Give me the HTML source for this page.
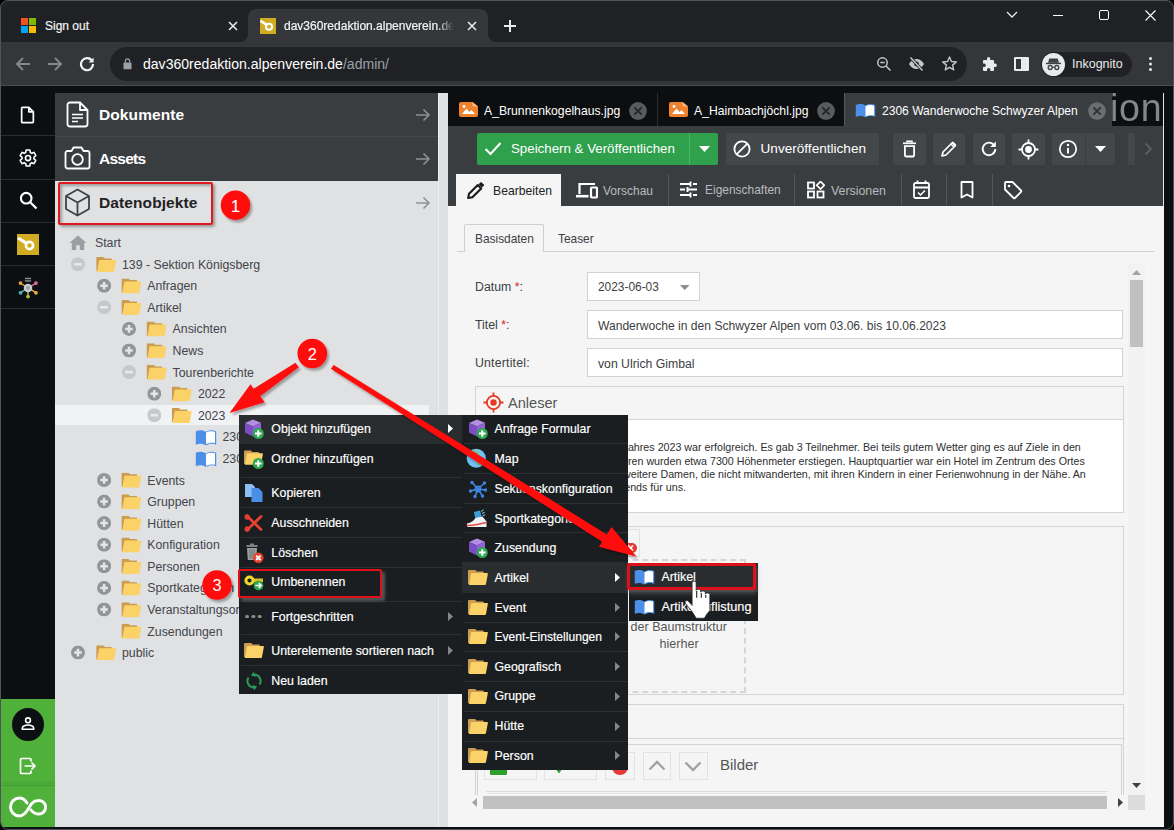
<!DOCTYPE html>
<html lang="de">
<head>
<meta charset="utf-8">
<title>dav360redaktion</title>
<style>
*{box-sizing:border-box;margin:0;padding:0}
html,body{width:1174px;height:830px;overflow:hidden;background:#0c0f12;font-family:"Liberation Sans",sans-serif;}
#root{position:relative;width:1174px;height:830px;overflow:hidden;background:#0c0f12}
.abs{position:absolute}
.t{position:absolute;white-space:nowrap;line-height:1}
/* ---------- browser chrome ---------- */
#tabstrip{left:0;top:0;width:1174px;height:42px;background:#202124}
#tab2{left:248px;top:9px;width:240px;height:34px;background:#35363a;border-radius:8px 8px 0 0}
#toolbar{left:0;top:42px;width:1174px;height:44px;background:#35363a;border-bottom:1px solid #4a4c50}
#omni{left:110px;top:47px;width:857px;height:33.500px;border-radius:17px;background:#202124}
.ct{color:#f1f3f4;font-size:12px;-webkit-text-stroke:.2px #f1f3f4}
/* ---------- pimcore ---------- */
#leftnav{left:0;top:86px;width:55px;height:744px;background:#0c0f12}
.navsep{position:absolute;left:0;width:55px;height:1px;background:#2a2d30}
#sidebar{left:55px;top:93px;width:383px;height:734px;background:#e0e1e2}
.acc{position:absolute;left:0;width:383px;height:44px;background:#3a3d40;color:#fff}
.acc .t{font-weight:bold;font-size:15.5px;left:44px;top:14px;letter-spacing:.1px}
#splitter{left:438px;top:93px;width:10px;height:734px;background:#dfe0e2;border-left:1.500px solid #eceded}
.tr{position:absolute;font-size:12.3px;color:#42454b;white-space:nowrap;line-height:14px}
.fold{position:absolute;width:19px;height:16px}
.exp{position:absolute;width:14px;height:14px;border-radius:50%}

/* main */
.mtab{position:absolute;top:93px;height:33px;color:#fff;font-size:12.150px}
.tb{position:absolute;top:133px;height:32px;background:#444749;border-radius:2px}
.tbt{position:absolute;white-space:nowrap;line-height:1;color:#fff}
.vsep{position:absolute;top:174px;width:1px;height:32px;background:#54575a}
.fld{position:absolute;background:#fff;border:1px solid #d2d2d2}
.lbl{position:absolute;white-space:nowrap;line-height:1;font-size:12.300px;color:#3d4043}
.fs{position:absolute;border:1px solid #d4d4d4}
.rte{position:absolute;white-space:nowrap;font-size:10.700px;color:#2e2e2e;line-height:1;text-align:right}

/* menus */
.menu{position:absolute;background:#1b1e21}
.mi{position:absolute;white-space:nowrap;line-height:1;font-size:12.350px;color:#fff;-webkit-text-stroke:.18px #fff}
.msep{position:absolute;height:1px;background:#2e3134}
</style>
</head>
<body>
<div id="root">

<!-- ================= BROWSER CHROME ================= -->
<div id="tabstrip" class="abs"></div>
<div id="tab2" class="abs"></div>
<div id="toolbar" class="abs"></div>
<div id="omni" class="abs"></div>

<svg class="abs" style="left:240px;top:34px" width="8" height="8" viewBox="0 0 8 8"><path d="M8 0V8H0A8 8 0 0 0 8 0Z" fill="#35363a"/></svg>
<svg class="abs" style="left:488px;top:34px" width="8" height="8" viewBox="0 0 8 8"><path d="M0 0V8H8A8 8 0 0 1 0 0Z" fill="#35363a"/></svg>
<!-- tab 1 -->
<div class="abs" style="left:21px;top:18px;width:7px;height:7px;background:#f25022"></div>
<div class="abs" style="left:29px;top:18px;width:7px;height:7px;background:#7fba00"></div>
<div class="abs" style="left:21px;top:26px;width:7px;height:7px;background:#00a4ef"></div>
<div class="abs" style="left:29px;top:26px;width:7px;height:7px;background:#ffb900"></div>
<div class="t ct" style="left:45px;top:20px;">Sign out</div>
<svg class="abs" style="left:227px;top:20px" width="12" height="12" viewBox="0 0 12 12"><path d="M2 2L10 10M10 2L2 10" stroke="#e8eaed" stroke-width="1.6" fill="none"/></svg>
<!-- tab 2 -->
<div class="abs" style="left:260px;top:18px;width:16px;height:16px;background:#d0ac22"></div>
<svg class="abs" style="left:260px;top:18px" width="16" height="16" viewBox="0 0 16 16"><circle cx="9" cy="8.800" r="3" fill="none" stroke="#fff" stroke-width="2.100"/><path d="M.5 2.800L6.800 7" stroke="#fff" stroke-width="2.600" fill="none"/></svg>
<div class="t ct" style="left:284px;top:20px;width:170px;overflow:hidden;-webkit-mask-image:linear-gradient(90deg,#000 90%,transparent);mask-image:linear-gradient(90deg,#000 90%,transparent)">dav360redaktion.alpenverein.de</div>
<svg class="abs" style="left:466px;top:20px" width="12" height="12" viewBox="0 0 12 12"><path d="M2 2L10 10M10 2L2 10" stroke="#e8eaed" stroke-width="1.6" fill="none"/></svg>
<svg class="abs" style="left:503px;top:19px" width="14" height="14" viewBox="0 0 14 14"><path d="M7 1V13M1 7H13" stroke="#e8eaed" stroke-width="2" fill="none"/></svg>
<!-- window controls -->
<svg class="abs" style="left:1005px;top:10px" width="14" height="10" viewBox="0 0 14 10"><path d="M2 2L7 7L12 2" stroke="#e8eaed" stroke-width="1.3" fill="none"/></svg>
<div class="abs" style="left:1053px;top:15px;width:10px;height:1px;background:#fff"></div>
<div class="abs" style="left:1099px;top:10px;width:10px;height:10px;border:1px solid #fff;border-radius:2px"></div>
<svg class="abs" style="left:1145px;top:10px" width="11" height="11" viewBox="0 0 11 11"><path d="M.5 .5L10.5 10.5M10.5 .5L.5 10.5" stroke="#fff" stroke-width="1.1" fill="none"/></svg>
<!-- nav buttons -->
<svg class="abs" style="left:15px;top:56px" width="16" height="16" viewBox="0 0 16 16"><path d="M15 8H2.5M8 2L2 8L8 14" stroke="#86888c" stroke-width="1.8" fill="none"/></svg>
<svg class="abs" style="left:47px;top:56px" width="16" height="16" viewBox="0 0 16 16"><path d="M1 8H13.5M8 2L14 8L8 14" stroke="#86888c" stroke-width="1.8" fill="none"/></svg>
<svg class="abs" style="left:79px;top:56px" width="16" height="16" viewBox="0 0 16 16"><path d="M13.2 5.2A6 6 0 1 0 14 8" stroke="#f1f3f4" stroke-width="2.200" fill="none"/><path d="M14.6 1.6V6.6H9.6Z" fill="#e8eaed"/></svg>
<!-- omnibox content -->
<svg class="abs" style="left:122.500px;top:58px" width="9" height="11.700" viewBox="0 0 10 13"><rect x="0.5" y="5" width="9" height="7.5" rx="1" fill="#9aa0a6"/><path d="M2.6 5V3.4a2.4 2.4 0 0 1 4.8 0V5" stroke="#9aa0a6" stroke-width="1.4" fill="none"/></svg>
<div class="t" style="left:143px;top:57.200px;font-size:14.05px;color:#fff">dav360redaktion.alpenverein.de<span style="color:#9aa0a6">/admin/</span></div>
<svg class="abs" style="left:876px;top:56px" width="16" height="16" viewBox="0 0 16 16"><circle cx="6.5" cy="6.5" r="4.7" stroke="#c4c7c9" stroke-width="1.5" fill="none"/><path d="M10 10L14.5 14.5M4.3 6.5H8.7" stroke="#c4c7c9" stroke-width="1.5" fill="none"/></svg>
<svg class="abs" style="left:908px;top:56px" width="17" height="16" viewBox="0 0 17 16"><path d="M1 8C3 4.5 5.5 3 8.5 3S14 4.5 16 8C14 11.5 11.500 13 8.5 13S3 11.500 1 8Z" fill="#c4c7c9"/><circle cx="8.500" cy="8" r="2.4" fill="#202124"/><path d="M2.5 1.500L14.500 14.500" stroke="#202124" stroke-width="3.200"/><path d="M2.500 1.500L14.500 14.500" stroke="#c4c7c9" stroke-width="1.500"/></svg>
<svg class="abs" style="left:941px;top:55px" width="17" height="17" viewBox="0 0 17 17"><path d="M8.5 2L10.4 6.500L15.300 6.900L11.600 10.100L12.700 14.900L8.500 12.300L4.300 14.900L5.400 10.100L1.700 6.900L6.600 6.500Z" stroke="#c4c7c9" stroke-width="1.400" fill="none" stroke-linejoin="round"/></svg>
<svg class="abs" style="left:981px;top:56px" width="16" height="16" viewBox="0 0 16 16"><path d="M6 2.600a1.600 1.600 0 0 1 3.200 0V4H12a1 1 0 0 1 1 1v2.500h1.200a1.700 1.700 0 0 1 0 3.400H13V14a1 1 0 0 1-1 1H9.400v-1.200a1.700 1.700 0 0 0-3.400 0V15H3a1 1 0 0 1-1-1v-3h1.200a1.700 1.700 0 0 0 0-3.400H2V5a1 1 0 0 1 1-1h3Z" fill="#e8eaed"/></svg>
<div class="abs" style="left:1014px;top:57px;width:15px;height:14px;border:2px solid #e8eaed;border-radius:1px;background:linear-gradient(90deg,transparent 0 5px,#e8eaed 5px)"></div>
<div class="abs" style="left:1041px;top:52px;width:91px;height:25px;border-radius:13px;background:#202124"></div>
<div class="abs" style="left:1042px;top:53px;width:23px;height:23px;border-radius:50%;background:#e8eaed"></div>
<svg class="abs" style="left:1045px;top:57px" width="17" height="15" viewBox="0 0 17 15"><path d="M4.300 1.500h8.400l1.300 4.200H3Z" fill="#3c4043"/><rect x="1" y="5.700" width="15" height="1.500" fill="#3c4043"/><circle cx="5.200" cy="10.500" r="2" fill="none" stroke="#3c4043" stroke-width="1.300"/><circle cx="11.800" cy="10.500" r="2" fill="none" stroke="#3c4043" stroke-width="1.300"/><path d="M7.200 10.200h2.600" stroke="#3c4043" stroke-width="1.200"/></svg>
<div class="t" style="left:1072px;top:58px;font-size:12.5px;color:#e8eaed">Inkognito</div>
<div class="abs" style="left:1149px;top:57px;width:3px;height:3px;border-radius:50%;background:#e8eaed;box-shadow:0 5.500px 0 #e8eaed,0 11px 0 #e8eaed"></div>
<!--CHROME-->

<!-- ================= LEFT NAV ================= -->
<div id="leftnav" class="abs">

<div class="navsep" style="top:49px"></div>
<div class="navsep" style="top:92.600px"></div>
<div class="navsep" style="top:136.200px"></div>
<div class="navsep" style="top:179px"></div>
<div class="navsep" style="top:222px"></div>
<!-- file -->
<svg class="abs" style="left:20px;top:20px" width="15" height="18" viewBox="0 0 16 20"><path d="M2.500 1.500H9.500L14.500 6.500V17.500a1 1 0 0 1-1 1H2.500a1 1 0 0 1-1-1V2.500a1 1 0 0 1 1-1ZM9.500 1.500V6.500H14.500" stroke="#fff" stroke-width="1.900" fill="none" stroke-linejoin="round"/></svg>
<!-- gear -->
<svg class="abs" style="left:18px;top:62px" width="20" height="20" viewBox="0 0 24 24"><path d="M19.140 12.940c.040-.300.060-.610.060-.940s-.020-.640-.070-.940l2.030-1.580a.490.490 0 0 0 .120-.610l-1.920-3.320a.488.488 0 0 0-.590-.220l-2.390.960c-.500-.380-1.030-.700-1.620-.940l-.360-2.540a.484.484 0 0 0-.480-.410h-3.840c-.240 0-.430.170-.470.410l-.360 2.540c-.590.240-1.130.570-1.620.940l-2.390-.960c-.220-.080-.470 0-.590.220L2.740 8.870c-.120.210-.080.470.120.610l2.030 1.580c-.050.300-.090.630-.090.940s.020.640.070.940l-2.030 1.580a.490.490 0 0 0-.120.610l1.920 3.320c.120.220.370.290.590.220l2.390-.960c.500.380 1.030.700 1.620.940l.360 2.540c.050.240.240.410.480.410h3.840c.240 0 .440-.170.470-.410l.360-2.540c.590-.240 1.130-.560 1.620-.940l2.390.960c.220.080.470 0 .590-.220l1.920-3.320c.120-.220.070-.470-.120-.610l-2.010-1.580z" stroke="#fff" stroke-width="1.900" fill="none"/><circle cx="12" cy="12" r="3.100" stroke="#fff" stroke-width="1.900" fill="none"/></svg>
<!-- search -->
<svg class="abs" style="left:19px;top:105px" width="19" height="19" viewBox="0 0 19 19"><circle cx="7.200" cy="7.200" r="5.300" stroke="#fff" stroke-width="2.100" fill="none"/><path d="M11.200 11.200L17.500 17.500" stroke="#fff" stroke-width="2.300"/></svg>
<!-- yellow logo -->
<div class="abs" style="left:17px;top:148px;width:22px;height:21px;background:#d0ac22"></div>
<svg class="abs" style="left:17px;top:148px" width="22" height="21" viewBox="0 0 22 21"><circle cx="12.500" cy="11.500" r="3.600" fill="none" stroke="#fff" stroke-width="2.600"/><path d="M1 4L9.800 9.400" stroke="#fff" stroke-width="3" fill="none"/></svg>
<!-- hub icon -->
<svg class="abs" style="left:17px;top:190px" width="22" height="23" viewBox="0 0 24 26"><g stroke-width="1.600"><path d="M12 13.500L4 8.500" stroke="#e8a33d"/><path d="M12 13.500L20.500 8.500" stroke="#e06c9f"/><path d="M12 13.500L4 18.500" stroke="#4db6ac"/><path d="M12 13.500L20.500 18.500" stroke="#e8b23d"/><path d="M12 13.500V22" stroke="#b9c22e"/></g><circle cx="3.500" cy="8" r="2.100" fill="#e8a33d"/><circle cx="21" cy="8" r="2.100" fill="#e06c9f"/><circle cx="3.500" cy="19" r="2.100" fill="#4db6ac"/><circle cx="21" cy="19" r="2.100" fill="#e8b23d"/><circle cx="12" cy="23.300" r="2.100" fill="#b9c22e"/><circle cx="12" cy="13.500" r="4.800" fill="#c9ced2"/><circle cx="12" cy="13.500" r="2.200" fill="#9aa3ab"/><rect x="8.500" y="2" width="7" height="1.600" fill="#8a9096"/><rect x="8.500" y="4.800" width="7" height="1.600" fill="#8a9096"/></svg>
<!-- bottom green -->
<div class="abs" style="left:1px;top:613px;width:54px;height:130px;background:#4fb03a;border-radius:0 0 0 7px"></div>
<div class="abs" style="left:1px;top:699px;width:54px;height:1px;background:#43a035;box-shadow:0 -2px 3px rgba(0,0,0,.18)"></div>
<div class="abs" style="left:12px;top:622px;width:32px;height:33px;border-radius:50%;background:#0c0f12"></div>
<svg class="abs" style="left:20px;top:630px" width="16" height="16" viewBox="0 0 16 16"><circle cx="8" cy="4.300" r="2.400" stroke="#fff" stroke-width="1.600" fill="none"/><path d="M2.300 13.200V12c0-2 3.500-3 5.700-3s5.700 1 5.700 3v1.200Z" stroke="#fff" stroke-width="1.600" fill="none" stroke-linejoin="round"/></svg>
<svg class="abs" style="left:19px;top:671px" width="18" height="18" viewBox="0 0 18 18"><path d="M12 4.500V2.500a1 1 0 0 0-1-1H2.500a1 1 0 0 0-1 1V15.500a1 1 0 0 0 1 1H11a1 1 0 0 0 1-1V13.500" stroke="#fff" stroke-width="1.700" fill="none"/><path d="M5.500 9H16M12.500 5.500L16 9L12.500 12.500" stroke="#fff" stroke-width="1.700" fill="none"/></svg>
<svg class="abs" style="left:8px;top:708px" width="40" height="26" viewBox="0 0 40 26"><path d="M20.500 14.500C17.500 19.500 15 22 11.500 22A9 9 0 1 1 11.500 4C15 4 17.200 6 19 9" stroke="#fff" stroke-width="2.900" fill="none" stroke-linecap="round"/><path d="M20.500 14.500C23 9.500 26 6.500 30 6.500A6.800 6.800 0 1 1 30 20C26.500 20 24 17.500 22.200 15" stroke="#fff" stroke-width="2.900" fill="none"/></svg>

</div>

<!-- ================= SIDEBAR ================= -->
<div id="sidebar" class="abs">

<div class="acc" style="top:0"><div class="t">Dokumente</div></div>
<div class="acc" style="top:43px;height:45px;border-top:1px solid #45484b"><div class="t" style="top:14px;letter-spacing:-.75px">Assets</div></div>
<div class="abs" style="left:0;top:88px;width:383px;height:44px;"><div class="t" style="font-weight:bold;font-size:15.500px;left:44px;top:14px;color:#1f2124;letter-spacing:.1px">Datenobjekte</div></div>
<!-- doc icon -->
<svg class="abs" style="left:11px;top:8px" width="23" height="27" viewBox="0 0 23 27"><path d="M4 1.500H14L21.500 9V23a2.500 2.500 0 0 1-2.500 2.500H4A2.500 2.500 0 0 1 1.500 23V4A2.500 2.500 0 0 1 4 1.500ZM14 1.500V9H21.500" stroke="#fff" stroke-width="1.800" fill="none" stroke-linejoin="round"/><path d="M6 13.500H17M6 17H17M6 20.500H12" stroke="#fff" stroke-width="1.700"/></svg>
<!-- camera -->
<svg class="abs" style="left:9px;top:53px" width="27" height="24" viewBox="0 0 27 24"><path d="M3.500 5H7.500L9.500 1.500H17.500L19.500 5H23.500a2 2 0 0 1 2 2V20.500a2 2 0 0 1-2 2H3.500a2 2 0 0 1-2-2V7a2 2 0 0 1 2-2Z" stroke="#fff" stroke-width="1.800" fill="none" stroke-linejoin="round"/><circle cx="13.500" cy="13.500" r="5.300" stroke="#fff" stroke-width="1.800" fill="none"/></svg>
<!-- cube -->
<svg class="abs" style="left:9px;top:95px" width="27" height="29" viewBox="0 0 27 29"><path d="M13.500 1.500L25 8V21L13.500 27.500L2 21V8ZM2 8L13.500 14.500L25 8M13.500 14.500V27.500" stroke="#3f4245" stroke-width="1.800" fill="none" stroke-linejoin="round"/></svg>
<svg class="abs" style="left:360px;top:15px" width="16" height="14" viewBox="0 0 16 14"><path d="M1 7H14M8.500 1.500L14 7L8.500 12.500" stroke="#8e9194" stroke-width="1.600" fill="none"/></svg><svg class="abs" style="left:360px;top:59px" width="16" height="14" viewBox="0 0 16 14"><path d="M1 7H14M8.500 1.500L14 7L8.500 12.500" stroke="#8e9194" stroke-width="1.600" fill="none"/></svg><svg class="abs" style="left:360px;top:103px" width="16" height="14" viewBox="0 0 16 14"><path d="M1 7H14M8.500 1.500L14 7L8.500 12.500" stroke="#8e9194" stroke-width="1.600" fill="none"/></svg><svg width="0" height="0" style="position:absolute"><defs><symbol id="fold" viewBox="0 0 20 15"><path d="M0 1Q0 0 1 0H7.200L8.600 1.600H15Q15.700 1.600 15.700 2.400V4.500H3.200L1.300 14.300H.6Q0 14.300 0 13.500Z" fill="#cc9c50"/><path d="M3.700 3H19.200Q20 3 19.850 3.900L18 14.100Q17.800 15 16.900 15H1.600Q.8 15 1 14.100L2.900 3.800Q3.050 3 3.700 3Z" fill="#fbd267"/></symbol><symbol id="book" viewBox="0 0 22 16" preserveAspectRatio="none"><path d="M.8 2C4 .7 8 .7 11 2.700C14 .7 18 .7 21.200 2V14.800C18 13.500 14 13.500 11 15.500C8 13.500 4 13.500 .8 14.800Z" fill="#4c8fe8"/><path d="M11 3.400C13.500 1.900 17 1.700 20 2.600V13.400C17 12.600 13.500 12.900 11 14.400Z" fill="#fff"/></symbol></defs></svg>
<svg class="abs" style="left:0;top:0;transform:translate(14.0px,142.0px)" width="18" height="16" viewBox="0 0 18 16"><path d="M9 .5L17.500 8H15.200V15H10.800V10.200H7.200V15H2.800V8H.5Z" fill="#9b9ea1"/></svg>
<div class="tr" style="left:0;top:0;transform:translate(40.0px,143.1px)">Start</div>
<svg class="abs" style="left:0;top:0;transform:translate(16.0px,164.2px)" width="14" height="14" viewBox="0 0 14 14"><circle cx="7" cy="7" r="7" fill="#c6c8ca"/><path d="M3.200 7H10.800" stroke="#e9eaeb" stroke-width="2.500"/></svg>
<svg class="abs" style="left:0;top:0;transform:translate(41.2px,163.9px)" width="20" height="15"><use href="#fold"/></svg>
<div class="tr" style="left:0;top:0;transform:translate(67.0px,164.7px)">139 - Sektion Königsberg</div>
<svg class="abs" style="left:0;top:0;transform:translate(42.1px,185.8px)" width="14" height="14" viewBox="0 0 14 14"><circle cx="7" cy="7" r="7" fill="#929598"/><path d="M3.200 7H10.800M7 3.200V10.800" stroke="#e4e5e6" stroke-width="2.500"/></svg>
<svg class="abs" style="left:0;top:0;transform:translate(66.4px,185.5px)" width="20" height="15"><use href="#fold"/></svg>
<div class="tr" style="left:0;top:0;transform:translate(92.3px,186.3px)">Anfragen</div>
<svg class="abs" style="left:0;top:0;transform:translate(42.1px,207.3px)" width="14" height="14" viewBox="0 0 14 14"><circle cx="7" cy="7" r="7" fill="#c6c8ca"/><path d="M3.200 7H10.800" stroke="#e9eaeb" stroke-width="2.500"/></svg>
<svg class="abs" style="left:0;top:0;transform:translate(66.4px,207.0px)" width="20" height="15"><use href="#fold"/></svg>
<div class="tr" style="left:0;top:0;transform:translate(92.3px,207.8px)">Artikel</div>
<svg class="abs" style="left:0;top:0;transform:translate(67.0px,228.9px)" width="14" height="14" viewBox="0 0 14 14"><circle cx="7" cy="7" r="7" fill="#929598"/><path d="M3.200 7H10.800M7 3.200V10.800" stroke="#e4e5e6" stroke-width="2.500"/></svg>
<svg class="abs" style="left:0;top:0;transform:translate(91.6px,228.6px)" width="20" height="15"><use href="#fold"/></svg>
<div class="tr" style="left:0;top:0;transform:translate(117.6px,229.4px)">Ansichten</div>
<svg class="abs" style="left:0;top:0;transform:translate(67.0px,250.5px)" width="14" height="14" viewBox="0 0 14 14"><circle cx="7" cy="7" r="7" fill="#929598"/><path d="M3.200 7H10.800M7 3.200V10.800" stroke="#e4e5e6" stroke-width="2.500"/></svg>
<svg class="abs" style="left:0;top:0;transform:translate(91.6px,250.2px)" width="20" height="15"><use href="#fold"/></svg>
<div class="tr" style="left:0;top:0;transform:translate(117.6px,251.0px)">News</div>
<svg class="abs" style="left:0;top:0;transform:translate(67.0px,272.1px)" width="14" height="14" viewBox="0 0 14 14"><circle cx="7" cy="7" r="7" fill="#c6c8ca"/><path d="M3.200 7H10.800" stroke="#e9eaeb" stroke-width="2.500"/></svg>
<svg class="abs" style="left:0;top:0;transform:translate(91.6px,271.8px)" width="20" height="15"><use href="#fold"/></svg>
<div class="tr" style="left:0;top:0;transform:translate(117.6px,272.6px)">Tourenberichte</div>
<svg class="abs" style="left:0;top:0;transform:translate(92.3px,293.7px)" width="14" height="14" viewBox="0 0 14 14"><circle cx="7" cy="7" r="7" fill="#929598"/><path d="M3.200 7H10.800M7 3.200V10.800" stroke="#e4e5e6" stroke-width="2.500"/></svg>
<svg class="abs" style="left:0;top:0;transform:translate(116.8px,293.4px)" width="20" height="15"><use href="#fold"/></svg>
<div class="tr" style="left:0;top:0;transform:translate(142.9px,294.2px)">2022</div>
<div class="abs" style="left:0;top:0;transform:translate(0.0px,312.0px);width:374px;height:20.400px;background:#f1f2f3"></div>
<svg class="abs" style="left:0;top:0;transform:translate(92.3px,315.2px)" width="14" height="14" viewBox="0 0 14 14"><circle cx="7" cy="7" r="7" fill="#c6c8ca"/><path d="M3.200 7H10.800" stroke="#e9eaeb" stroke-width="2.500"/></svg>
<svg class="abs" style="left:0;top:0;transform:translate(116.8px,314.9px)" width="20" height="15"><use href="#fold"/></svg>
<div class="tr" style="left:0;top:0;transform:translate(142.9px,315.7px)">2023</div>
<svg class="abs" style="left:0;top:0;transform:translate(140.0px,336.0px)" width="22" height="17"><use href="#book"/></svg>
<div class="tr" style="left:0;top:0;transform:translate(167.5px,337.3px)">2306 Wanderwoche Schwyzer Alpen</div>
<svg class="abs" style="left:0;top:0;transform:translate(140.0px,357.6px)" width="22" height="17"><use href="#book"/></svg>
<div class="tr" style="left:0;top:0;transform:translate(167.5px,358.9px)">2307 Bergtour</div>
<svg class="abs" style="left:0;top:0;transform:translate(42.1px,380.0px)" width="14" height="14" viewBox="0 0 14 14"><circle cx="7" cy="7" r="7" fill="#929598"/><path d="M3.200 7H10.800M7 3.200V10.800" stroke="#e4e5e6" stroke-width="2.500"/></svg>
<svg class="abs" style="left:0;top:0;transform:translate(66.4px,379.7px)" width="20" height="15"><use href="#fold"/></svg>
<div class="tr" style="left:0;top:0;transform:translate(92.3px,380.5px)">Events</div>
<svg class="abs" style="left:0;top:0;transform:translate(42.1px,401.6px)" width="14" height="14" viewBox="0 0 14 14"><circle cx="7" cy="7" r="7" fill="#929598"/><path d="M3.200 7H10.800M7 3.200V10.800" stroke="#e4e5e6" stroke-width="2.500"/></svg>
<svg class="abs" style="left:0;top:0;transform:translate(66.4px,401.3px)" width="20" height="15"><use href="#fold"/></svg>
<div class="tr" style="left:0;top:0;transform:translate(92.3px,402.1px)">Gruppen</div>
<svg class="abs" style="left:0;top:0;transform:translate(42.1px,423.1px)" width="14" height="14" viewBox="0 0 14 14"><circle cx="7" cy="7" r="7" fill="#929598"/><path d="M3.200 7H10.800M7 3.200V10.800" stroke="#e4e5e6" stroke-width="2.500"/></svg>
<svg class="abs" style="left:0;top:0;transform:translate(66.4px,422.8px)" width="20" height="15"><use href="#fold"/></svg>
<div class="tr" style="left:0;top:0;transform:translate(92.3px,423.6px)">Hütten</div>
<svg class="abs" style="left:0;top:0;transform:translate(42.1px,444.7px)" width="14" height="14" viewBox="0 0 14 14"><circle cx="7" cy="7" r="7" fill="#929598"/><path d="M3.200 7H10.800M7 3.200V10.800" stroke="#e4e5e6" stroke-width="2.500"/></svg>
<svg class="abs" style="left:0;top:0;transform:translate(66.4px,444.4px)" width="20" height="15"><use href="#fold"/></svg>
<div class="tr" style="left:0;top:0;transform:translate(92.3px,445.2px)">Konfiguration</div>
<svg class="abs" style="left:0;top:0;transform:translate(42.1px,466.3px)" width="14" height="14" viewBox="0 0 14 14"><circle cx="7" cy="7" r="7" fill="#929598"/><path d="M3.200 7H10.800M7 3.200V10.800" stroke="#e4e5e6" stroke-width="2.500"/></svg>
<svg class="abs" style="left:0;top:0;transform:translate(66.4px,466.0px)" width="20" height="15"><use href="#fold"/></svg>
<div class="tr" style="left:0;top:0;transform:translate(92.3px,466.8px)">Personen</div>
<svg class="abs" style="left:0;top:0;transform:translate(42.1px,487.9px)" width="14" height="14" viewBox="0 0 14 14"><circle cx="7" cy="7" r="7" fill="#929598"/><path d="M3.200 7H10.800M7 3.200V10.800" stroke="#e4e5e6" stroke-width="2.500"/></svg>
<svg class="abs" style="left:0;top:0;transform:translate(66.4px,487.6px)" width="20" height="15"><use href="#fold"/></svg>
<div class="tr" style="left:0;top:0;transform:translate(92.3px,488.4px)">Sportkategorien</div>
<svg class="abs" style="left:0;top:0;transform:translate(42.1px,509.5px)" width="14" height="14" viewBox="0 0 14 14"><circle cx="7" cy="7" r="7" fill="#929598"/><path d="M3.200 7H10.800M7 3.200V10.800" stroke="#e4e5e6" stroke-width="2.500"/></svg>
<svg class="abs" style="left:0;top:0;transform:translate(66.4px,509.2px)" width="20" height="15"><use href="#fold"/></svg>
<div class="tr" style="left:0;top:0;transform:translate(92.3px,510.0px)">Veranstaltungsorte</div>
<svg class="abs" style="left:0;top:0;transform:translate(66.4px,530.7px)" width="20" height="15"><use href="#fold"/></svg>
<div class="tr" style="left:0;top:0;transform:translate(92.3px,531.5px)">Zusendungen</div>
<svg class="abs" style="left:0;top:0;transform:translate(16.0px,552.6px)" width="14" height="14" viewBox="0 0 14 14"><circle cx="7" cy="7" r="7" fill="#929598"/><path d="M3.200 7H10.800M7 3.200V10.800" stroke="#e4e5e6" stroke-width="2.500"/></svg>
<svg class="abs" style="left:0;top:0;transform:translate(41.2px,552.3px)" width="20" height="15"><use href="#fold"/></svg>
<div class="tr" style="left:0;top:0;transform:translate(67.0px,553.1px)">public</div>
</div>
<div id="splitter" class="abs"></div>

<!-- ================= MAIN ================= -->
<div class="abs" style="left:448px;top:93px;width:716px;height:734px;background:#f5f5f5"></div>

<!-- main tab bar -->
<div class="abs" style="left:448px;top:93px;width:716px;height:33px;background:#0c0e10"></div>
<div class="t" style="left:1109.800px;top:89.200px;font-size:38.500px;color:#84878a;letter-spacing:.8px;transform:scaleX(.975);transform-origin:0 0">ion</div>
<div class="abs" style="left:1112px;top:126px;width:52px;height:10px;background:#3a3d40"></div>
<div class="abs" style="left:657px;top:93px;width:1px;height:33px;background:#2a2d30"></div>
<div class="abs" style="left:844px;top:93px;width:268px;height:33px;background:#3a3d40;border-left:1px solid #56595c"></div>
<svg class="abs" style="left:459px;top:102px" width="19" height="15" viewBox="0 0 19 15"><path d="M2 0H13.500L19 4.500V13a2 2 0 0 1-2 2H2a2 2 0 0 1-2-2V2A2 2 0 0 1 2 0Z" fill="#f0812d"/><path d="M13.500 0L19 4.500H14.500a1 1 0 0 1-1-1Z" fill="#f8b888"/><path d="M3 12L7.500 6.500L10.500 10L12.500 8L16 12Z" fill="#fff"/><circle cx="5" cy="4.500" r="1.400" fill="#fff"/></svg><div class="t" style="left:484px;top:104.6px;font-size:12.200px;color:#fff">A_Brunnenkogelhaus.jpg</div><svg class="abs" style="left:629px;top:102px" width="18" height="18" viewBox="0 0 18 18"><circle cx="9" cy="9" r="8.900" fill="#595c5f"/><path d="M5.400 5.400L12.600 12.600M12.600 5.400L5.400 12.600" stroke="#25282b" stroke-width="1.900"/></svg><svg class="abs" style="left:669px;top:102px" width="19" height="15" viewBox="0 0 19 15"><path d="M2 0H13.500L19 4.500V13a2 2 0 0 1-2 2H2a2 2 0 0 1-2-2V2A2 2 0 0 1 2 0Z" fill="#f0812d"/><path d="M13.500 0L19 4.500H14.500a1 1 0 0 1-1-1Z" fill="#f8b888"/><path d="M3 12L7.500 6.500L10.500 10L12.500 8L16 12Z" fill="#fff"/><circle cx="5" cy="4.500" r="1.400" fill="#fff"/></svg><div class="t" style="left:694px;top:104.6px;font-size:12.200px;color:#fff">A_Haimbachjöchl.jpg</div><svg class="abs" style="left:817px;top:102px" width="18" height="18" viewBox="0 0 18 18"><circle cx="9" cy="9" r="8.900" fill="#595c5f"/><path d="M5.400 5.400L12.600 12.600M12.600 5.400L5.400 12.600" stroke="#25282b" stroke-width="1.900"/></svg><svg class="abs" style="left:855px;top:103px" width="21" height="15"><use href="#book"/></svg><div class="t" style="left:882px;top:104.6px;font-size:12.060px;color:#fff">2306 Wanderwoche Schwyzer Alpen</div><svg class="abs" style="left:1088px;top:101.800px" width="18" height="18" viewBox="0 0 18 18"><circle cx="9" cy="9" r="8.800" fill="#6b6e71"/><path d="M5.400 5.400L12.600 12.600M12.600 5.400L5.400 12.600" stroke="#2f3235" stroke-width="1.900"/></svg>
<!-- toolbar -->
<div class="abs" style="left:448px;top:126px;width:716px;height:80px;background:#3a3d40"></div>
<div class="abs" style="left:477px;top:133px;width:241px;height:32px;background:#2fa04c;border-radius:2px"></div>
<div class="abs" style="left:689px;top:133px;width:1px;height:32px;background:#4db567"></div>
<svg class="abs" style="left:484px;top:141px" width="18" height="15" viewBox="0 0 18 15"><path d="M1.500 8L6.500 13L16.500 2" stroke="#fff" stroke-width="2.100" fill="none"/></svg>
<div class="tbt" style="left:511px;top:142px;font-size:13.300px">Speichern &amp; Veröffentlichen</div>
<svg class="abs" style="left:699px;top:146px" width="11" height="6" viewBox="0 0 11 6"><path d="M0 0H11L5.500 6Z" fill="#fff"/></svg>
<div class="tb" style="left:726px;width:153px"></div>
<svg class="abs" style="left:733px;top:140px" width="18" height="18" viewBox="0 0 18 18"><circle cx="9" cy="9" r="7.600" stroke="#fff" stroke-width="1.800" fill="none"/><path d="M3.800 14.200L14.200 3.800" stroke="#fff" stroke-width="1.800"/></svg>
<div class="tbt" style="left:760.500px;top:142px;font-size:13.600px">Unveröffentlichen</div>
<div class="tb" style="left:893px;width:33px"></div>
<svg class="abs" style="left:902px;top:140px" width="15" height="18" viewBox="0 0 15 18"><path d="M1 3.300H14" stroke="#fff" stroke-width="1.700"/><path d="M5 2.500V1.200H10V2.500" stroke="#fff" stroke-width="1.500" fill="none"/><path d="M2.900 6.200V15.300a1.200 1.200 0 0 0 1.200 1.200H10.900a1.200 1.200 0 0 0 1.200-1.200V6.200Z" stroke="#fff" stroke-width="1.800" fill="none"/></svg>
<div class="tb" style="left:933px;width:32px"></div>
<svg class="abs" style="left:940px;top:140px" width="18" height="18" viewBox="0 0 18 18"><path d="M2 16L3 12L12.500 2.500L15.500 5.500L6 15ZM11 4L14 7" stroke="#fff" stroke-width="1.700" fill="none" stroke-linejoin="round"/><path d="M11.700 3.300L13.300 1.700L16.300 4.700L14.700 6.300Z" fill="#fff"/></svg>
<div class="tb" style="left:973px;width:32px"></div>
<svg class="abs" style="left:980px;top:140px" width="18" height="18" viewBox="0 0 18 18"><path d="M14.300 5.500A6.300 6.300 0 1 0 15.300 9" stroke="#fff" stroke-width="1.900" fill="none"/><path d="M15.800 1.500V7H10.300Z" fill="#fff"/></svg>
<div class="tb" style="left:1012px;width:33px"></div>
<svg class="abs" style="left:1018px;top:139px" width="21" height="21" viewBox="0 0 21 21"><circle cx="10.500" cy="10.500" r="6.500" stroke="#fff" stroke-width="1.800" fill="none"/><circle cx="10.500" cy="10.500" r="3.400" fill="#fff"/><path d="M10.500 0.500V4M10.500 17V20.500M0.500 10.500H4M17 10.500H20.500" stroke="#fff" stroke-width="1.800"/></svg>
<div class="tb" style="left:1052px;width:63px"></div>
<div class="abs" style="left:1085px;top:133px;width:1px;height:32px;background:#3a3d40"></div>
<svg class="abs" style="left:1058px;top:139px" width="20" height="20" viewBox="0 0 20 20"><circle cx="10" cy="10" r="8.200" stroke="#fff" stroke-width="1.700" fill="none"/><path d="M10 9V14.500" stroke="#fff" stroke-width="1.900"/><circle cx="10" cy="6" r="1.200" fill="#fff"/></svg>
<svg class="abs" style="left:1095px;top:146px" width="11" height="6" viewBox="0 0 11 6"><path d="M0 0H11L5.500 6Z" fill="#fff"/></svg>
<div class="abs" style="left:1128px;top:133px;width:7px;height:32px;background:#444749"></div>
<svg class="abs" style="left:1144px;top:142px" width="9" height="14" viewBox="0 0 9 14"><path d="M1.500 1.500L7 7L1.500 12.500" stroke="#5d6063" stroke-width="1.800" fill="none"/></svg>
<!-- second tabs -->
<div class="abs" style="left:456px;top:174px;width:105px;height:32px;background:#f5f5f5"></div>
<svg class="abs" style="left:466px;top:181px" width="19" height="19" viewBox="0 0 19 19"><path d="M2.200 17L3 12.800L11.800 4L15.200 7.400L6.400 16.200Z" fill="none" stroke="#1c1c1c" stroke-width="2.100" stroke-linejoin="round"/><path d="M12.600 3.200L14.400 1.400Q15 .8 15.600 1.400L17.800 3.600Q18.400 4.200 17.800 4.800L16 6.600Z" fill="#1c1c1c"/></svg>
<div class="tbt" style="left:493px;top:185.0px;font-size:12.200px;color:#222">Bearbeiten</div>
<svg class="abs" style="left:576px;top:181px" width="22" height="18" viewBox="0 0 22 18"><path d="M3.500 13V3H19" stroke="#fff" stroke-width="2.200" fill="none"/><path d="M0 15.200H12.500" stroke="#fff" stroke-width="2.600"/><rect x="15" y="6.500" width="6" height="10" rx="1" stroke="#fff" stroke-width="2.200" fill="none"/></svg>
<div class="tbt" style="left:603px;top:185.0px;font-size:12px;color:#b9bbbd">Vorschau</div>
<div class="vsep" style="left:668px"></div>
<svg class="abs" style="left:680px;top:181px" width="17" height="17" viewBox="0 0 17 17"><path d="M0 3H10M13 3H17M0 8.500H5M8 8.500H17M0 14H10M13 14H17M10.500 .5V5.500M7.500 6V11M10.500 11.500V16.500" stroke="#fff" stroke-width="1.900" fill="none"/></svg>
<div class="tbt" style="left:705px;top:185.0px;font-size:11.960px;color:#b9bbbd">Eigenschaften</div>
<div class="vsep" style="left:794px"></div>
<svg class="abs" style="left:807px;top:181px" width="18" height="18" viewBox="0 0 18 18"><rect x="1" y="1.500" width="6" height="6" stroke="#fff" stroke-width="1.800" fill="none"/><rect x="1" y="10.500" width="6" height="6" stroke="#fff" stroke-width="1.800" fill="none"/><rect x="10.500" y="10.500" width="6" height="6" stroke="#fff" stroke-width="1.800" fill="none"/><path d="M13.500 .5L17.300 4.300L13.500 8.100L9.700 4.300Z" stroke="#fff" stroke-width="1.700" fill="none"/></svg>
<div class="tbt" style="left:831px;top:185.0px;font-size:12.370px;color:#b9bbbd">Versionen</div>
<div class="vsep" style="left:901px"></div>
<svg class="abs" style="left:913px;top:180px" width="17" height="19" viewBox="0 0 17 19"><rect x="1" y="3" width="15" height="15" rx="1.500" stroke="#fff" stroke-width="1.800" fill="none"/><path d="M1 7.500H16M4.500 .5V4M12.500 .5V4" stroke="#fff" stroke-width="1.800"/><path d="M5 12.500L7.500 15L12 10.500" stroke="#fff" stroke-width="1.500" fill="none"/></svg>
<div class="vsep" style="left:946px"></div>
<svg class="abs" style="left:960px;top:181px" width="14" height="18" viewBox="0 0 14 18"><path d="M1.500 1H12.500V16.500L7 13.500L1.500 16.500Z" stroke="#fff" stroke-width="1.800" fill="none" stroke-linejoin="round"/></svg>
<div class="vsep" style="left:992px"></div>
<svg class="abs" style="left:1003px;top:180px" width="20" height="20" viewBox="0 0 20 20"><path d="M2 3a1 1 0 0 1 1-1H9.500L18 10.500a1 1 0 0 1 0 1.400L12 18a1 1 0 0 1-1.400 0L2 9.500Z" stroke="#fff" stroke-width="1.800" fill="none" stroke-linejoin="round"/><circle cx="6" cy="6" r="1.300" fill="#fff"/></svg>
<div class="abs" style="left:1163px;top:93px;width:1px;height:113px;background:#e4e5e6"></div>
<!-- inner tabs -->
<div class="abs" style="left:457px;top:251px;width:697px;height:1px;background:#d0d0d0"></div>
<div class="abs" style="left:464px;top:224px;width:80px;height:28px;background:#f5f5f5;border:1px solid #d0d0d0;border-bottom:none;border-radius:2px 2px 0 0"></div>
<div class="lbl" style="left:475px;top:234.0px;font-size:11.900px">Basisdaten</div>
<div class="lbl" style="left:558px;top:234.0px;font-size:11.900px">Teaser</div>
<!-- form -->
<div class="lbl" style="left:475px;top:281px">Datum <span style="color:#d9201e">*</span>:</div>
<div class="fld" style="left:587px;top:272px;width:113px;height:29px"></div>
<div class="lbl" style="left:598px;top:282px;font-size:11.900px">2023-06-03</div>
<svg class="abs" style="left:680px;top:284.500px" width="9.500" height="5.200" viewBox="0 0 11 6"><path d="M0 0H11L5.500 6Z" fill="#8f8f8f"/></svg>
<div class="lbl" style="left:475px;top:319px">Titel <span style="color:#d9201e">*</span>:</div>
<div class="fld" style="left:587px;top:310px;width:536px;height:29px"></div>
<div class="lbl" style="left:598px;top:320px;font-size:12.080px">Wanderwoche in den Schwyzer Alpen vom 03.06. bis 10.06.2023</div>
<div class="lbl" style="left:475px;top:357px;letter-spacing:.2px">Untertitel:</div>
<div class="fld" style="left:587px;top:348px;width:536px;height:29px"></div>
<div class="lbl" style="left:598px;top:358px;font-size:12.240px">von Ulrich Gimbal</div>
<!-- Anleser -->
<div class="fs" style="left:475px;top:386px;width:649px;height:127px;background:#fff"></div>
<div class="abs" style="left:476px;top:387px;width:647px;height:33px;background:#f5f5f5;border-bottom:1px solid #d4d4d4"></div>
<svg class="abs" style="left:483px;top:392px" width="21" height="21" viewBox="0 0 21 21"><circle cx="10.500" cy="10.500" r="6.600" stroke="#e63a24" stroke-width="1.800" fill="none"/><circle cx="10.500" cy="10.500" r="3.200" fill="#e63a24"/><path d="M10.500 0.500V4M10.500 17V20.500M0.500 10.500H4M17 10.500H20.500" stroke="#e63a24" stroke-width="1.800"/></svg>
<div class="lbl" style="left:508px;top:396px;font-size:14.600px;color:#555">Anleser</div>
<div class="rte" style="right:93.200px;top:442px">Die Wanderwoche des Jahres 2023 war erfolgreich. Es gab 3 Teilnehmer. Bei teils gutem Wetter ging es auf Ziele in den</div>
<div class="rte" style="right:89.200px;top:455.500px">Schwyzer Alpen. Bei den Touren wurden etwa 7300 Höhenmeter erstiegen. Hauptquartier war ein Hotel im Zentrum des Ortes</div>
<div class="rte" style="right:88.200px;top:469px">Mit dabei waren zwei weitere Damen, die nicht mitwanderten, mit ihren Kindern in einer Ferienwohnung in der Nähe. An</div>
<div class="rte" style="right:488px;top:482px">den Abends für uns.</div>
<!-- fieldset 2 -->
<div class="fs" style="left:475px;top:526px;width:649px;height:169px"></div>
<div class="abs" style="left:613px;top:559px;width:133px;height:134px;border:2px dashed #d6d6d6"></div>
<div class="lbl" style="left:630.500px;top:621px;font-size:12.570px;color:#555">der Baumstruktur</div>
<div class="lbl" style="left:659.500px;top:637.500px;font-size:12.570px;color:#555">hierher</div>
<!-- fieldset 3 -->
<div class="fs" style="left:475px;top:704px;width:649px;height:130px"></div>
<div class="abs" style="left:476px;top:738px;width:647px;height:1px;background:#d4d4d4"></div>
<div class="fs" style="left:477px;top:744px;width:645px;height:90px"></div>
<div class="fld" style="left:484px;top:752px;width:53px;height:28px;background:#f5f5f5;border-color:#e2e2e2"></div>
<div class="abs" style="left:490px;top:767px;width:17px;height:7.500px;background:#2ca02c;border-radius:1px"></div>
<div class="fld" style="left:544px;top:752px;width:53px;height:28px;background:#f5f5f5;border-color:#e2e2e2"></div>
<div class="abs" style="left:554.500px;top:767px;width:9px;height:6.500px;background:#2ca02c;clip-path:polygon(0 0,100% 0,50% 100%)"></div>
<div class="fld" style="left:605px;top:752px;width:30px;height:28px;background:#f5f5f5;border-color:#e2e2e2"></div>
<div class="abs" style="left:611.500px;top:758.500px;width:16px;height:16px;border-radius:50%;background:#e53935"></div>
<div class="fld" style="left:643px;top:752px;width:28px;height:28px;background:#f5f5f5;border-color:#e2e2e2"></div>
<svg class="abs" style="left:648px;top:760px" width="18" height="11" viewBox="0 0 18 11"><path d="M1.500 9.500L9 2L16.500 9.500" stroke="#a2a2a2" stroke-width="2.400" fill="none"/></svg>
<div class="fld" style="left:679px;top:752px;width:29px;height:28px;background:#f5f5f5;border-color:#e2e2e2"></div>
<svg class="abs" style="left:684px;top:761px" width="18" height="11" viewBox="0 0 18 11"><path d="M1.500 1.500L9 9L16.500 1.500" stroke="#a2a2a2" stroke-width="2.400" fill="none"/></svg>
<div class="lbl" style="left:720px;top:757px;font-size:15px;color:#555">Bilder</div>
<div class="abs" style="left:486px;top:790.500px;width:622px;height:1px;background:#dcdcdc"></div><div class="abs" style="left:488px;top:793px;width:618px;height:1px;background:#e6e6e6"></div>
<!-- scrollbars -->
<div class="abs" style="left:470px;top:795px;width:658px;height:15px;background:#f5f5f5"></div>
<div class="abs" style="left:483px;top:796px;width:624px;height:13px;background:#c1c1c1"></div>
<svg class="abs" style="left:472px;top:798px" width="5" height="9" viewBox="0 0 5 9"><path d="M5 0V9L0 4.500Z" fill="#a3a3a3"/></svg>
<svg class="abs" style="left:1118px;top:798px" width="5" height="9" viewBox="0 0 5 9"><path d="M0 0V9L5 4.500Z" fill="#404040"/></svg>
<div class="abs" style="left:1128px;top:264px;width:17px;height:531px;background:#f2f2f2"></div>
<div class="abs" style="left:1128px;top:795px;width:17px;height:15px;background:#dcdcdc"></div>
<div class="abs" style="left:1130px;top:280px;width:13px;height:67px;background:#c1c1c1"></div>
<svg class="abs" style="left:1132px;top:270px" width="9" height="5" viewBox="0 0 9 5"><path d="M0 5H9L4.500 0Z" fill="#a3a3a3"/></svg>
<svg class="abs" style="left:1132px;top:783px" width="9" height="5" viewBox="0 0 9 5"><path d="M0 0H9L4.500 5Z" fill="#404040"/></svg>
<!-- bottom / right borders -->
<div class="abs" style="left:448px;top:810px;width:716px;height:17px;background:#f5f5f5"></div>
<div class="abs" style="left:0;top:827px;width:1174px;height:3px;background:#0c0f12"></div>
<div class="abs" style="left:1164px;top:86px;width:10px;height:744px;background:#0c0f12"></div>

<!-- ================= OVERLAYS ================= -->
<svg width="0" height="0" style="position:absolute"><defs>
<symbol id="cube" viewBox="0 0 20 20"><path d="M9 0.500L17 3.800L9 7.500L1 4Z" fill="#b58ce6"/><path d="M1 4L9 7.500V17.500L1 13.500Z" fill="#7a4fc4"/><path d="M9 7.500L17 3.800V13.500L9 17.500Z" fill="#9063d6"/><circle cx="14.300" cy="14.500" r="5.500" fill="#2fa84f"/><path d="M11 14.500H17.600M14.300 11.200V17.800" stroke="#fff" stroke-width="2"/></symbol>
<symbol id="foldp" viewBox="0 0 20 20"><g transform="translate(0 1.500) scale(.95)"><path d="M0 1Q0 0 1 0H7.200L8.600 1.600H15Q15.700 1.600 15.700 2.400V4.500H3.200L1.300 14.300H.6Q0 14.300 0 13.500Z" fill="#cc9c50"/><path d="M3.700 3H19.200Q20 3 19.850 3.900L18 14.100Q17.800 15 16.900 15H1.600Q.8 15 1 14.100L2.900 3.800Q3.050 3 3.700 3Z" fill="#fbd267"/></g><circle cx="14.300" cy="14.500" r="5.500" fill="#2fa84f"/><path d="M11 14.500H17.600M14.300 11.200V17.800" stroke="#fff" stroke-width="2"/></symbol>
<symbol id="copy" viewBox="0 0 20 20"><path d="M1 1H8L11 4V14H1Z" fill="#8fbdf5"/><path d="M7.500 5H14.500L18.500 9V19H7.500Z" fill="#4a8fe6"/></symbol>
<symbol id="cut" viewBox="0 0 20 20"><path d="M3 3L17 16.500M3 17L17 3.500" stroke="#ea4030" stroke-width="2.700" fill="none" stroke-linecap="round"/><circle cx="3.200" cy="4" r="1.900" stroke="#ea4030" stroke-width="1.500" fill="none"/><circle cx="3.200" cy="16" r="1.900" stroke="#ea4030" stroke-width="1.500" fill="none"/></symbol>
<symbol id="trash" viewBox="0 0 20 20"><rect x="2.500" y="2" width="11" height="2" fill="#7d8083"/><rect x="6" y="0.500" width="4" height="2" fill="#7d8083"/><path d="M3 5H13L12.200 17H3.800Z" fill="#9a9d9f"/><path d="M6 6.500V15.500M8 6.500V15.500M10 6.500V15.500" stroke="#6d7073" stroke-width=".9"/><circle cx="14.300" cy="14.800" r="5.200" fill="#e8402e"/><path d="M12.100 12.600L16.500 17M16.500 12.600L12.100 17" stroke="#fff" stroke-width="1.900"/></symbol>
<symbol id="ren" viewBox="0 0 20 20"><rect x="8" y="6.500" width="11" height="3.500" fill="#d9c024"/><circle cx="5.500" cy="8.500" r="3.600" stroke="#f0d92a" stroke-width="3" fill="none"/><circle cx="14.500" cy="13.500" r="4.800" fill="#2fa84f"/><path d="M11.500 13.500H17M14.800 11L17.200 13.500L14.800 16" stroke="#fff" stroke-width="1.500" fill="none"/></symbol>
<symbol id="reload" viewBox="0 0 20 20"><g transform="rotate(65 10 10)"><path d="M15.500 6.500A6.500 6.500 0 0 0 4 7.500M4.500 13.500A6.500 6.500 0 0 0 16 12.500" stroke="#2d9b5a" stroke-width="2" fill="none"/><path d="M1.500 6.500H7L4 10.500Z" fill="#2d9b5a"/><path d="M18.500 13.500H13L16 9.500Z" fill="#2d9b5a"/></g></symbol>
<symbol id="globe" viewBox="0 0 20 20"><circle cx="10" cy="10" r="9.300" fill="#6ec3f0"/><path d="M6 3C9 1.500 12 3 12.500 5.500C13 8 10 9 8 8.500C5 8 4 5 6 3ZM11 11C14 10 16.500 12 15 15C14 17.500 11 17 10.500 14.500C10.200 13 10 11.500 11 11Z" fill="#7cc46a"/></symbol>
<symbol id="net" viewBox="0 0 20 20"><g stroke="#3f86e8" stroke-width="1.500"><path d="M10 10L4 3.500M10 10L16.500 4M10 10L2.500 12M10 10L17.500 11M10 10L7 17.500M10 10L14.500 17"/></g><circle cx="10" cy="10" r="2.600" fill="none" stroke="#3f86e8" stroke-width="1.600"/><circle cx="4" cy="3.500" r="1.700" fill="#3f86e8"/><circle cx="16.500" cy="4" r="1.700" fill="#3f86e8"/><circle cx="2.500" cy="12" r="1.700" fill="#3f86e8"/><circle cx="17.500" cy="11" r="1.700" fill="#3f86e8"/><circle cx="7" cy="17.500" r="1.700" fill="#3f86e8"/><circle cx="14.500" cy="17" r="1.700" fill="#3f86e8"/></symbol>
<symbol id="shoe" viewBox="0 0 22 20"><path d="M8 3L14 1.500L16 9L9.500 11Z" fill="#3e9fd8"/><path d="M15 2.500L17.500 0.800M16 4.500L18.800 3.200M16.800 6.500L19.300 5.800" stroke="#8fd0f0" stroke-width="1"/><path d="M1 14.500C5 14 8 11.500 9.500 9L16.500 7.500L20.500 12.500V18H1.500Q0.500 16 1 14.500Z" fill="#f2f2f2"/><path d="M1 15.800C7 16 14 14 20.500 12.800V14.300C14 15.500 7 17.500 1.200 17.200Z" fill="#e04a4a"/></symbol>
<symbol id="arrw" viewBox="0 0 5 9"><path d="M0 0L5 4.500L0 9Z"/></symbol>
</defs></svg>
<div class="menu" style="left:239px;top:415px;width:223px;height:279px"></div>
<div class="abs" style="left:239px;top:415px;width:223px;height:28.800px;background:#2a2d30"></div>
<svg class="abs" style="left:244px;top:418.7px" width="20" height="20"><use href="#cube"/></svg>
<div class="mi" style="left:271.300px;top:422.6px">Objekt hinzufügen</div>
<svg class="abs" style="left:447.800px;top:424.2px" width="5" height="9" fill="#fff"><use href="#arrw"/></svg>
<svg class="abs" style="left:244px;top:448.6px" width="20" height="20"><use href="#foldp"/></svg>
<div class="mi" style="left:271.300px;top:452.5px">Ordner hinzufügen</div>
<svg class="abs" style="left:244px;top:483.0px" width="20" height="20"><use href="#copy"/></svg>
<div class="mi" style="left:271.300px;top:486.9px">Kopieren</div>
<svg class="abs" style="left:244px;top:513.0px" width="20" height="20"><use href="#cut"/></svg>
<div class="mi" style="left:271.300px;top:516.9px">Ausschneiden</div>
<svg class="abs" style="left:244px;top:542.6px" width="20" height="20"><use href="#trash"/></svg>
<div class="mi" style="left:271.300px;top:546.5px">Löschen</div>
<svg class="abs" style="left:244px;top:571.8px" width="20" height="20"><use href="#ren"/></svg>
<div class="mi" style="left:271.300px;top:575.7px">Umbenennen</div>
<div class="abs" style="left:245px;top:614.9px;width:3.600px;height:3.600px;border-radius:50%;background:#8a8d90;box-shadow:6.400px 0 0 #8a8d90,12.700px 0 0 #8a8d90"></div>
<div class="mi" style="left:271.300px;top:610.6px">Fortgeschritten</div>
<svg class="abs" style="left:447.800px;top:612.2px" width="5" height="9" fill="#85888b"><use href="#arrw"/></svg>
<svg class="abs" style="left:244px;top:643.3px" width="20" height="15"><use href="#fold"/></svg>
<div class="mi" style="left:271.300px;top:644.7px">Unterelemente sortieren nach</div>
<svg class="abs" style="left:447.800px;top:646.3px" width="5" height="9" fill="#85888b"><use href="#arrw"/></svg>
<svg class="abs" style="left:244px;top:671.0px" width="20" height="20"><use href="#reload"/></svg>
<div class="mi" style="left:271.300px;top:674.9px">Neu laden</div>
<div class="msep" style="left:241px;top:477.0px;width:221px"></div>
<div class="msep" style="left:241px;top:506.9px;width:221px"></div>
<div class="msep" style="left:241px;top:536.9px;width:221px"></div>
<div class="msep" style="left:241px;top:566.7px;width:221px"></div>
<div class="msep" style="left:241px;top:600.8px;width:221px"></div>
<div class="msep" style="left:241px;top:634.1px;width:221px"></div>
<div class="msep" style="left:241px;top:665.1px;width:221px"></div>
<div class="menu" style="left:462px;top:415px;width:166px;height:355px"></div>
<div class="abs" style="left:462px;top:562px;width:166px;height:30.500px;background:#2a2d30"></div>
<svg class="abs" style="left:467.500px;top:418.7px" width="20" height="20"><use href="#cube"/></svg>
<div class="mi" style="left:494.500px;top:422.6px">Anfrage Formular</div>
<svg class="abs" style="left:466.300px;top:448.200px" width="20.500" height="20.500"><use href="#globe"/></svg>
<div class="mi" style="left:494.500px;top:452.5px">Map</div>
<svg class="abs" style="left:467.500px;top:478.6px" width="20" height="20"><use href="#net"/></svg>
<div class="mi" style="left:494.500px;top:482.5px">Sektionskonfiguration</div>
<svg class="abs" style="left:466px;top:508.6px" width="22" height="20"><use href="#shoe"/></svg>
<div class="mi" style="left:494.500px;top:512.5px">Sportkategorie</div>
<svg class="abs" style="left:467.500px;top:538.2px" width="20" height="20"><use href="#cube"/></svg>
<div class="mi" style="left:494.500px;top:542.1px">Zusendung</div>
<svg class="abs" style="left:468px;top:570.2px" width="20" height="15"><use href="#fold"/></svg>
<div class="mi" style="left:494.500px;top:571.6px">Artikel</div>
<svg class="abs" style="left:614.500px;top:573.2px" width="5" height="9" fill="#fff"><use href="#arrw"/></svg>
<svg class="abs" style="left:468px;top:600.2px" width="20" height="15"><use href="#fold"/></svg>
<div class="mi" style="left:494.500px;top:601.6px">Event</div>
<svg class="abs" style="left:614.500px;top:603.2px" width="5" height="9" fill="#85888b"><use href="#arrw"/></svg>
<svg class="abs" style="left:468px;top:629.4px" width="20" height="15"><use href="#fold"/></svg>
<div class="mi" style="left:494.500px;top:630.8px;font-size:12.100px">Event-Einstellungen</div>
<svg class="abs" style="left:614.500px;top:632.4px" width="5" height="9" fill="#85888b"><use href="#arrw"/></svg>
<svg class="abs" style="left:468px;top:659.2px" width="20" height="15"><use href="#fold"/></svg>
<div class="mi" style="left:494.500px;top:660.6px">Geografisch</div>
<svg class="abs" style="left:614.500px;top:662.2px" width="5" height="9" fill="#85888b"><use href="#arrw"/></svg>
<svg class="abs" style="left:468px;top:689.0px" width="20" height="15"><use href="#fold"/></svg>
<div class="mi" style="left:494.500px;top:690.4px">Gruppe</div>
<svg class="abs" style="left:614.500px;top:692.0px" width="5" height="9" fill="#85888b"><use href="#arrw"/></svg>
<svg class="abs" style="left:468px;top:718.5px" width="20" height="15"><use href="#fold"/></svg>
<div class="mi" style="left:494.500px;top:719.9px">Hütte</div>
<svg class="abs" style="left:614.500px;top:721.5px" width="5" height="9" fill="#85888b"><use href="#arrw"/></svg>
<svg class="abs" style="left:468px;top:748.2px" width="20" height="15"><use href="#fold"/></svg>
<div class="mi" style="left:494.500px;top:749.6px">Person</div>
<svg class="abs" style="left:614.500px;top:751.2px" width="5" height="9" fill="#85888b"><use href="#arrw"/></svg>
<div class="msep" style="left:464px;top:442.8px;width:164px"></div>
<div class="msep" style="left:464px;top:472.7px;width:164px"></div>
<div class="msep" style="left:464px;top:502.9px;width:164px"></div>
<div class="msep" style="left:464px;top:532.3px;width:164px"></div>
<div class="msep" style="left:464px;top:621.7px;width:164px"></div>
<div class="msep" style="left:464px;top:651.3px;width:164px"></div>
<div class="msep" style="left:464px;top:681.1px;width:164px"></div>
<div class="msep" style="left:464px;top:710.8px;width:164px"></div>
<div class="msep" style="left:464px;top:740.5px;width:164px"></div>
<div class="menu" style="left:629px;top:562.500px;width:128.500px;height:58.500px"></div>
<div class="abs" style="left:629px;top:562.500px;width:128.500px;height:29px;background:#2a2d30"></div>
<svg class="abs" style="left:633.500px;top:568.7px" width="21" height="16"><use href="#book"/></svg>
<div class="mi" style="left:661.500px;top:570.6px">Artikel</div>
<svg class="abs" style="left:633.500px;top:598.6px" width="21" height="16"><use href="#book"/></svg>
<div class="mi" style="left:661.500px;top:600.5px;font-size:12.750px">Artikelauflistung</div>

<!-- fragment behind arrow -->
<div class="abs" style="left:628px;top:529px;width:12px;height:28px;border:1px solid #e2e2e2;border-left:none;background:#f5f5f5"></div>
<div class="abs" style="left:628px;top:543px;width:9px;height:10px;border-radius:0 5px 5px 0;background:#e53935"></div><svg class="abs" style="left:628px;top:544px" width="8" height="8" viewBox="0 0 8 8"><path d="M0 1L5 6.500M5 1.500L0 7" stroke="#fff" stroke-width="1.600"/></svg>
<!-- red boxes -->
<div class="abs" style="left:57.500px;top:181.600px;width:155.200px;height:43.300px;border:2px solid #e0191c;border-radius:2px;box-shadow:2px 2px 3px rgba(0,0,0,.33),inset 2px 2px 3px rgba(0,0,0,.3)"></div>
<div class="abs" style="left:238.400px;top:569.300px;width:143.600px;height:28.300px;border:2.800px solid #e0101a;border-radius:2px;box-shadow:3px 3px 3px rgba(150,150,150,.45)"></div>
<div class="abs" style="left:626.800px;top:563.400px;width:129.700px;height:26.200px;border:3px solid #e0101a;border-radius:2px;box-shadow:1px 4px 4px rgba(110,110,110,.5)"></div>
<!-- arrows -->
<svg class="abs" style="left:0;top:0" width="1174" height="830" viewBox="0 0 1174 830">
<defs><filter id="sh" x="-10%" y="-10%" width="120%" height="130%"><feDropShadow dx="2" dy="2.500" stdDeviation="1.300" flood-color="#000" flood-opacity=".32"/></filter></defs>
<g fill="#ff0a0a" filter="url(#sh)">
<path d="M295.500 362.800L253.600 388.800L250.500 384.200L229.500 412.900L264.600 402.300L260.200 396.300L298.700 367.300Z"/>
<path d="M333.700 364.900L606.800 534.400L611.600 526.900L636.300 556.500L599 546.700L602.200 541.700L330.900 368.800Z"/>
</g>
<g filter="url(#sh)">
<circle cx="235.500" cy="205.200" r="14.700" fill="#ff0a0a"/><circle cx="312.300" cy="353.500" r="14.800" fill="#ff0a0a"/><circle cx="217" cy="585" r="14.700" fill="#ff0a0a"/>
</g>
</svg>
<div class="t" style="left:231px;top:197.500px;font-size:16.300px;color:#fff;-webkit-text-stroke:.15px #fff">1</div>
<div class="t" style="left:307.800px;top:345.500px;font-size:16.300px;color:#fff;">2</div>
<div class="t" style="left:212.500px;top:577px;font-size:16.300px;color:#fff;">3</div>
<!-- hand cursor -->
<svg class="abs" style="left:0;top:0" width="1174" height="830" viewBox="0 0 1174 830"><path d="M692.100 582.800Q692.100 581.100 694.100 581.100T696.100 582.800V590.400Q696.300 589.200 698.400 589.200T700.600 590.600V592.200Q700.800 590.900 703 590.900T705.300 592.400V594.200Q705.600 592.900 707.600 592.900T709.800 594.600V610.500L706.800 614.200L704.300 618.200H696.200L692.400 612L685.300 603.200Q684.300 601.400 686 600.700T689.300 602.200L692.100 605.600Z" fill="#fff" stroke="#1b1e21" stroke-width=".7"/><path d="M696.700 591V597.700M701.300 593V597.700M705.800 595V597.700" stroke="#1b1e21" stroke-width="1.100"/></svg>


<div class="abs" style="left:0;top:0;width:1174px;height:830px;border:1px solid #505357;border-radius:8px;box-shadow:0 0 0 12px #000;pointer-events:none"></div>
</div>
</body>
</html>
